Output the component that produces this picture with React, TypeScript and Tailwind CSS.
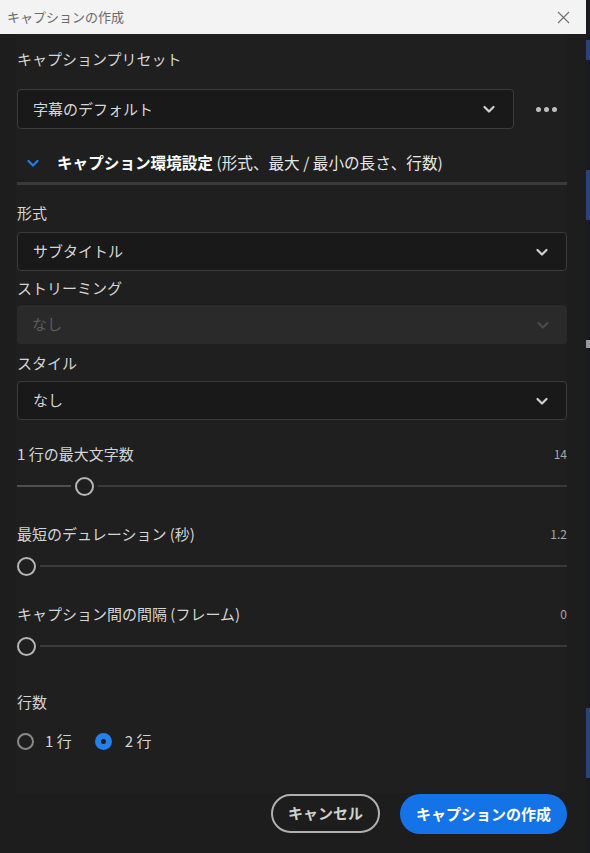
import { useState } from 'react';

const font = { fontFamily: '"Noto Sans CJK JP", "Noto Sans", sans-serif' };

function Chevron({ className }: { className?: string }) {
  return (
    <svg className={className} width="14" height="14" viewBox="0 0 14 14" fill="none" stroke="currentColor" strokeWidth={2.2} strokeLinecap="round" strokeLinejoin="round">
      <path d="M2.5 5l4.5 4.5L11.5 5" />
    </svg>
  );
}

function Select({ value, disabled, className = '' }: { value: string; disabled?: boolean; className?: string }) {
  return (
    <div
      className={`flex h-[39px] items-center justify-between rounded-[4px] pl-[15px] pr-[17px] text-[15px] ${
        disabled ? 'bg-[#2a2a2a] text-[#5e5e5e]' : 'border border-[#3c3c3c] bg-[#191919] text-[#d6d6d6]'
      } ${className}`}
    >
      <span>{value}</span>
      <Chevron className={disabled ? 'text-[#4a4a4a]' : 'text-[#d0d0d0]'} />
    </div>
  );
}

function Slider({ label, value, pos, className = '' }: { label: string; value: string; pos: number; className?: string }) {
  return (
    <div className={className}>
      <div className="flex h-[22px] items-center justify-between">
        <span className="text-[15px] text-[#d4d4d4]">{label}</span>
        <span className="text-[12px] text-[#a8a8a8]">{value}</span>
      </div>
      <div className="mt-[11px] flex h-[20px] items-center">
        {pos > 0 && <div className="h-[2px] bg-[#505050]" style={{ width: pos }} />}
        <div className={`h-[19px] w-[19px] shrink-0 rounded-full border-2 border-[#b4b4b4] bg-[#1f1f1f] ${pos > 0 ? 'mx-[4px]' : 'mr-[4px]'}`} />
        <div className="h-[2px] flex-1 bg-[#3a3a3a]" />
      </div>
    </div>
  );
}

export default function App() {
  const [lines, setLines] = useState(2);

  return (
    <div className="flex h-[853px] w-[590px] overflow-hidden bg-[#1d1d1d]" style={font}>
      <div className="flex w-[586px] flex-col">
        {/* title bar */}
        <div className="flex h-[34px] shrink-0 items-center justify-between bg-[#f3f3f3] pl-[7px] pr-[16px]">
          <span className="text-[13px] text-[#6a6a6a]">キャプションの作成</span>
          <svg width="13" height="13" viewBox="0 0 13 13" stroke="#707070" strokeWidth={1.1}>
            <path d="M1 1l11 11M12 1L1 12" />
          </svg>
        </div>

        <div className="flex flex-1 flex-col">
          <div className="ml-[16px] mr-[19px] flex h-[759px] flex-col bg-[#1f1f1f] pl-[1px] pt-[14px]">
            <div className="flex h-[22px] items-center text-[15px] text-[#d4d4d4]">キャプションプリセット</div>
            <div className="mt-[19px] flex items-center">
              <Select value="字幕のデフォルト" className="h-[40px] w-[497px]" />
              <div className="ml-[22px] flex gap-[3px]">
                <span className="h-[5px] w-[5px] rounded-full bg-[#bdbdbd]" />
                <span className="h-[5px] w-[5px] rounded-full bg-[#bdbdbd]" />
                <span className="h-[5px] w-[5px] rounded-full bg-[#bdbdbd]" />
              </div>
            </div>

            <div className="mt-[22px] flex h-[24px] items-center pl-[9px] text-[15.6px]">
              <Chevron className="text-[#1f7ee9]" />
              <span className="ml-[17px] whitespace-pre">
                <span className="font-bold text-white">キャプション環境設定</span>
                <span className="text-[#e6e6e6]"> (形式、最大 / 最小の長さ、行数)</span>
              </span>
            </div>
            <div className="mt-[7px] h-[3px] bg-[#3a3a3a]" />

            <div className="mt-[17px] flex h-[22px] items-center text-[15px] text-[#d4d4d4]">形式</div>
            <Select value="サブタイトル" className="mt-[8px]" />

            <div className="mt-[6px] flex h-[22px] items-center text-[15px] text-[#d4d4d4]">ストリーミング</div>
            <Select value="なし" disabled className="mt-[6px]" />

            <div className="mt-[8px] flex h-[22px] items-center text-[15px] text-[#d4d4d4]">スタイル</div>
            <Select value="なし" className="mt-[7px]" />

            <Slider label="1 行の最大文字数" value="14" pos={54} className="mt-[23px]" />
            <Slider label="最短のデュレーション (秒)" value="1.2" pos={0} className="mt-[27px]" />
            <Slider label="キャプション間の間隔 (フレーム)" value="0" pos={0} className="mt-[27px]" />

            <div className="mt-[35px] flex h-[22px] items-center text-[15px] text-[#d4d4d4]">行数</div>
            <div className="mt-[17px] flex h-[22px] items-center text-[15px] text-[#d4d4d4]">
              {[1, 2].map((n) => (
                <button key={n} onClick={() => setLines(n)} className={`flex items-center ${n === 2 ? 'ml-[23px]' : ''}`}>
                  {lines === n ? (
                    <span className="flex h-[17px] w-[17px] items-center justify-center rounded-full bg-[#2680eb]">
                      <span className="h-[5px] w-[5px] rounded-full bg-[#1f1f1f]" />
                    </span>
                  ) : (
                    <span className="h-[17px] w-[17px] rounded-full border-2 border-[#8a8a8a]" />
                  )}
                  <span className={n === 2 ? 'ml-[13px]' : 'ml-[11px]'}>{n} 行</span>
                </button>
              ))}
            </div>
          </div>

          <div className="mr-[19px] mt-[1px] flex justify-end gap-[20px]">
            <button className="h-[39px] w-[109px] rounded-full border-2 border-[#b0b0b0] text-[15px] font-bold text-[#cfcfcf]">
              キャンセル
            </button>
            <button className="h-[40px] w-[167px] rounded-full bg-[#1473e6] text-[15px] font-bold text-white">
              キャプションの作成
            </button>
          </div>
        </div>
      </div>
      <div className="flex w-[4px] flex-col bg-[#191b20]">
        <div className="mt-[40px] h-[20px] bg-[#24447e]" />
        <div className="mt-[110px] h-[50px] bg-[#24447e]" />
        <div className="mt-[120px] h-[8px] bg-[#9a9a9a]" />
        <div className="mt-[360px] h-[70px] bg-[#24447e]" />
      </div>
    </div>
  );
}
